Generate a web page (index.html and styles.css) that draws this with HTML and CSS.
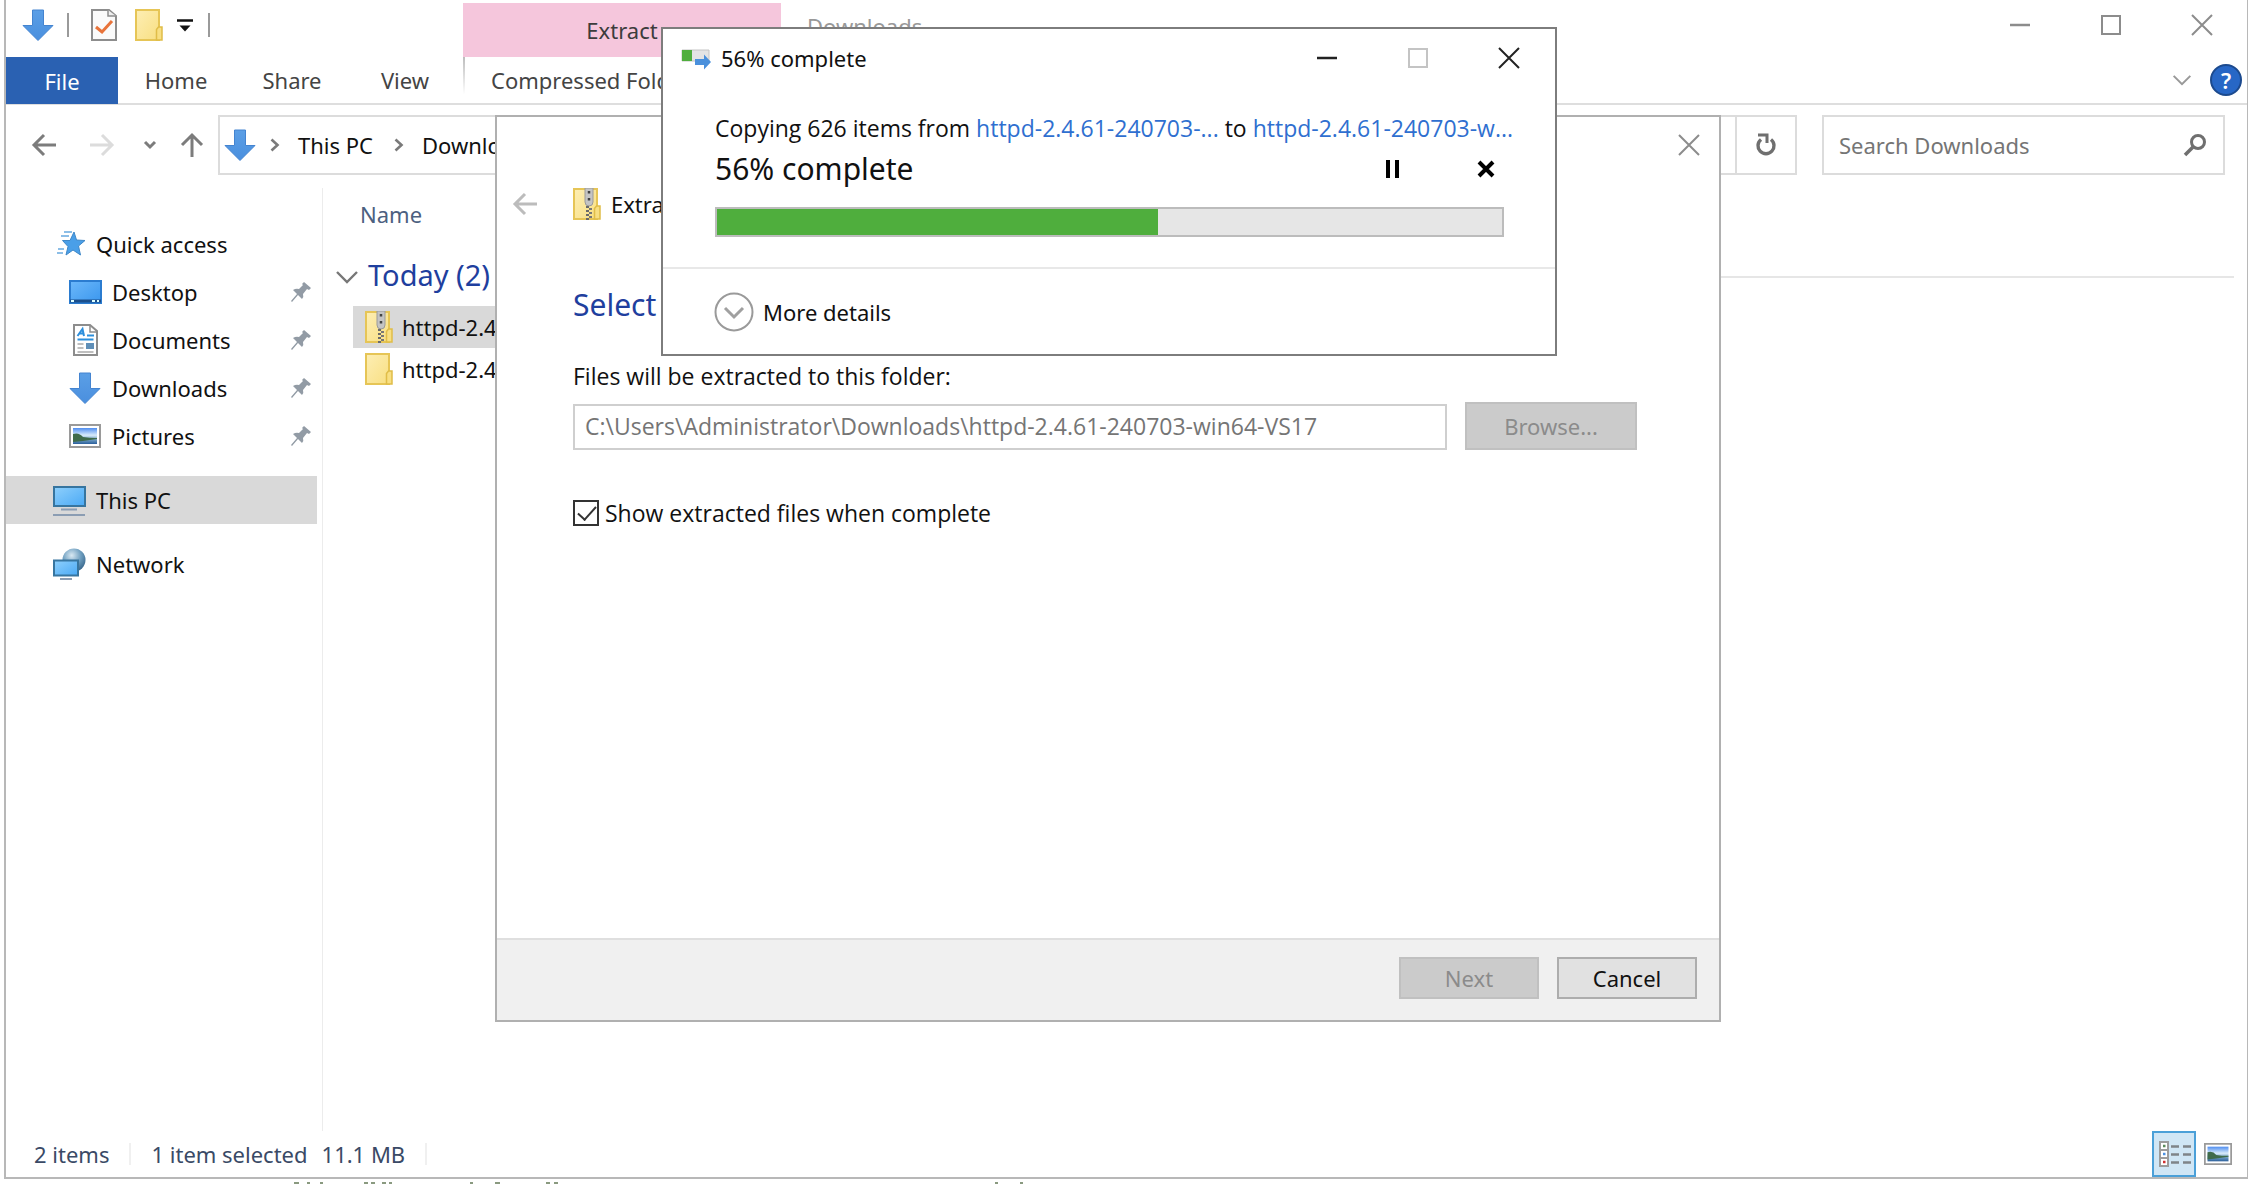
FILE: index.html
```html
<!DOCTYPE html>
<html lang="en">
<head>
<meta charset="utf-8">
<title>Downloads</title>
<link rel="stylesheet" href="styles.css">
</head>
<body>
<svg width="0" height="0" class="defs" aria-hidden="true">
  <defs>
    <linearGradient id="blue" x1="0" y1="0" x2="1" y2="1"><stop offset="0" stop-color="#6cb8fa"/><stop offset="1" stop-color="#3a96ee"/></linearGradient>
    <linearGradient id="screen" x1="0" y1="0" x2="1" y2="1"><stop offset="0" stop-color="#8fd0fc"/><stop offset="1" stop-color="#4aa9f5"/></linearGradient>
    <linearGradient id="arrow" x1="0" y1="0" x2="0" y2="1"><stop offset="0" stop-color="#5b9fe6"/><stop offset="1" stop-color="#4a8fde"/></linearGradient>
    <linearGradient id="yellow" x1="0" y1="0" x2="1" y2="1"><stop offset="0" stop-color="#fdeeb4"/><stop offset="1" stop-color="#f8df82"/></linearGradient>
    <linearGradient id="photo" x1="0" y1="0" x2="0" y2="1"><stop offset="0" stop-color="#4f8df0"/><stop offset=".45" stop-color="#d8ebfa"/><stop offset=".7" stop-color="#7aa6c8"/><stop offset="1" stop-color="#2a5f9c"/></linearGradient>
    <radialGradient id="globe" cx=".4" cy=".3" r=".8"><stop offset="0" stop-color="#d8e8f2"/><stop offset=".5" stop-color="#6f9fc0"/><stop offset="1" stop-color="#2c5a80"/></radialGradient>
    <symbol id="i-down" viewBox="0 0 32 32"><path d="M10.500 1h11v15.500H31L16 31.500 1 16.500h9.500z" fill="url(#arrow)" stroke="#4484d0"/></symbol>
    <symbol id="i-folder" viewBox="0 0 28 32"><path d="M1 1h23v30H1z" fill="url(#yellow)" stroke="#e6c556" stroke-width="2"/><path d="M21.500 31V20.500l2-2.500h3.500v13z" fill="#f8df82" stroke="#e0bd48" stroke-width="1.500"/></symbol>
    <symbol id="i-zip" viewBox="0 0 28 32"><use href="#i-folder"/><path d="M12 0h8v14q0 4-4 4t-4-4z" fill="#c4c4c4" stroke="#9a9a9a"/><path d="M16 3v2.500M16 10v2.500" stroke="#444" stroke-width="2.500"/><path d="M14.500 18v14" stroke="#6a6a6a" stroke-width="3" stroke-dasharray="2 2"/><path d="M17.500 20v12" stroke="#777" stroke-width="3" stroke-dasharray="2 2"/></symbol>
    <symbol id="i-photo" viewBox="0 0 32 24"><path d="M1 1h30v22H1z" fill="#fff" stroke="#9a9a9a" stroke-width="2"/><path d="M4 4h24v16H4z" fill="url(#photo)"/><path d="M4 10q6-2 10 3 6 1 14 1v1l-14 2-10 1z" fill="#3f6b4a"/></symbol>
    <symbol id="i-pin" viewBox="0 0 22 22"><path d="M14 1l7 6-2 2-2-1-4 5q1 3-1 5l-4-4-6 7-1-1 6-7-4-4q3-2 6-1l4-4-1-1z" fill="#929ba5"/></symbol>
    <symbol id="i-close" viewBox="0 0 22 22"><path d="M1 1l20 20M21 1L1 21" fill="none" stroke="currentColor" stroke-width="2"/></symbol>
    <symbol id="i-min" viewBox="0 0 22 22"><path d="M1 11h20" stroke="currentColor" stroke-width="2.500"/></symbol>
    <symbol id="i-max" viewBox="0 0 22 22"><path d="M2 2h18v18H2z" fill="none" stroke="currentColor" stroke-width="2"/></symbol>
    <symbol id="i-back" viewBox="0 0 26 24"><path d="M25 12H2.500M13 2L3 12l10 10" fill="none" stroke="currentColor" stroke-width="3"/></symbol>
    <symbol id="i-crumb" viewBox="0 0 10 14"><path d="M1.500 1.500L7.500 7l-6 5.500" fill="none" stroke="#7a7a7a" stroke-width="2.600"/></symbol>
    <symbol id="i-chev" viewBox="0 0 24 14"><path d="M2 2l10 10L22 2" fill="none" stroke="currentColor" stroke-width="2.400"/></symbol>
  </defs>
</svg>

<main class="explorer">
  <header class="titlebar">
    <div class="quickbar">
      <svg class="ic32 q-app"><use href="#i-down"/></svg>
      <span class="tick"></span>
      <button class="bare q-props" aria-label="Properties"><svg width="26" height="32" viewBox="0 0 26 32"><path d="M1 1h17l7 6v24H1z" fill="#fafafa" stroke="#8d8d8d" stroke-width="2"/><path d="M17 1v6h8" fill="#eee" stroke="#8d8d8d" stroke-width="1.500"/><path d="M5 18l6 5 10-11" fill="none" stroke="#e8733a" stroke-width="3"/></svg></button>
      <button class="bare q-new" aria-label="New folder"><svg class="ic-folder"><use href="#i-folder"/></svg></button>
      <button class="bare q-more" aria-label="Customize"><svg width="16" height="13" viewBox="0 0 16 13"><path d="M0 1.500h16" stroke="#111" stroke-width="2.500"/><path d="M2.500 6.500h11L8 12.500z" fill="#111"/></svg></button>
      <span class="tick"></span>
    </div>
    <div class="context">Extract</div>
    <div class="wintitle">Downloads</div>
    <div class="winbtns gray">
      <button class="bare" aria-label="Minimize"><svg class="ic22"><use href="#i-min"/></svg></button>
      <button class="bare" aria-label="Maximize"><svg class="ic22"><use href="#i-max"/></svg></button>
      <button class="bare" aria-label="Close"><svg class="ic22"><use href="#i-close"/></svg></button>
    </div>
  </header>
  <nav class="ribbon">
    <button class="tab file">File</button>
    <button class="tab">Home</button>
    <button class="tab">Share</button>
    <button class="tab view-tab">View</button>
    <button class="tab tools">Compressed Folder Tools</button>
    <div class="ribbon-end">
      <button class="bare" aria-label="Expand ribbon"><svg class="chev-s"><use href="#i-chev"/></svg></button>
      <button class="help" aria-label="Help">?</button>
    </div>
  </nav>
  <div class="navrow">
    <div class="arrows">
      <button class="bare" aria-label="Back"><svg class="ic-arrow"><use href="#i-back"/></svg></button>
      <button class="bare faint" aria-label="Forward"><svg class="ic-arrow flip"><use href="#i-back"/></svg></button>
      <button class="bare" aria-label="Recent"><svg width="14" height="10" viewBox="0 0 14 10"><path d="M2 2l5 5 5-5" fill="none" stroke="currentColor" stroke-width="3"/></svg></button>
      <button class="bare" aria-label="Up"><svg width="24" height="26" viewBox="0 0 24 26"><path d="M12 25V3M2 13L12 3l10 10" fill="none" stroke="currentColor" stroke-width="3"/></svg></button>
    </div>
    <div class="address">
      <svg class="ic32"><use href="#i-down"/></svg>
      <svg class="crumb"><use href="#i-crumb"/></svg>
      <a href="#pc">This PC</a>
      <svg class="crumb"><use href="#i-crumb"/></svg>
      <a href="#downloads">Downloads</a>
      <button class="bare refresh" aria-label="Refresh"><svg width="22" height="24" viewBox="0 0 22 24"><path d="M16 6.500A8 8 0 1 1 6 6.500" fill="none" stroke="currentColor" stroke-width="3.400"/><path d="M3 2h9v8" fill="none" stroke="currentColor" stroke-width="3"/></svg></button>
    </div>
    <div class="search">
      <input type="search" aria-label="Search Downloads" placeholder="Search Downloads">
      <svg width="24" height="24" viewBox="0 0 24 24"><circle cx="15" cy="9" r="6.500" fill="none" stroke="#6f6f6f" stroke-width="3"/><path d="M10.500 13.500L2 22" stroke="#6f6f6f" stroke-width="3.600"/></svg>
    </div>
  </div>
  <div class="body">
    <aside class="tree">
      <a class="row top" href="#quick"><svg class="ticon" viewBox="0 0 34 32"><path d="M22 4l2.500 8 8.500.5-6.500 5.500 2 9-7.500-5-7 5 2-8.500-5.500-6h7.500z" fill="#4a9fe8" stroke="#3f88c8"/><path d="M12 4h8M9 8h8M6 21h6M5 25h6" stroke="#67a9e0" stroke-width="1.500"/></svg>Quick access</a>
      <a class="row" href="#desktop"><svg class="ticon" viewBox="0 0 34 32"><path d="M2 5h31v22H2z" fill="url(#blue)" stroke="#2b7cd0" stroke-width="2"/><path d="M2 25h31" stroke="#1b4f8c" stroke-width="3"/><path d="M3 25h3M24 25h3M29 25h2" stroke="#dff" stroke-width="2"/></svg>Desktop<svg class="pin"><use href="#i-pin"/></svg></a>
      <a class="row" href="#documents"><svg class="ticon" viewBox="0 0 34 32"><path d="M6 1h16l7 6v24H6z" fill="#fff" stroke="#8d8d8d" stroke-width="2"/><path d="M22 1v7h7" fill="none" stroke="#8d8d8d" stroke-width="1.500"/><path d="M9.500 12l5-7 1.500 7M11 9.500h5M19 11.500h7M9.500 15.500h16" stroke="#2d8fdc" stroke-width="2" fill="none"/><path d="M9.500 20h6M9.500 24h6M9.500 28h16" stroke="#aaa" stroke-width="1.500"/><path d="M18 19h8v6h-8z" fill="#5f8fb8"/></svg>Documents<svg class="pin"><use href="#i-pin"/></svg></a>
      <a class="row" href="#downloads"><svg class="ticon"><use href="#i-down"/></svg>Downloads<svg class="pin"><use href="#i-pin"/></svg></a>
      <a class="row" href="#pictures"><svg class="ticon photo"><use href="#i-photo"/></svg>Pictures<svg class="pin"><use href="#i-pin"/></svg></a>
      <a class="row top selected" href="#pc"><svg class="ticon" viewBox="0 0 34 32"><path d="M2 3h31v19H2z" fill="url(#screen)" stroke="#37759f" stroke-width="2"/><path d="M9 25.500h16M1 31h32" stroke="#8b9db3" stroke-width="2"/></svg>This PC</a>
      <a class="row top" href="#network"><svg class="ticon" viewBox="0 0 34 32"><circle cx="22" cy="12" r="11.500" fill="url(#globe)"/><path d="M2 12.500h24v15H2z" fill="url(#screen)" stroke="#37759f" stroke-width="2"/><path d="M8 31h12" stroke="#8b9db3" stroke-width="2"/></svg>Network</a>
    </aside>
    <section class="list">
      <button class="bare colhead">Name</button>
      <div class="group"><svg class="chev-g"><use href="#i-chev"/></svg><h2>Today (2)</h2><span class="rule"></span></div>
      <a class="item selected" href="#zip"><svg class="ic-folder"><use href="#i-zip"/></svg>httpd-2.4.6</a>
      <a class="item" href="#folder"><svg class="ic-folder"><use href="#i-folder"/></svg>httpd-2.4.6</a>
    </section>
  </div>
  <footer class="status">
    <span class="cell count">2 items</span>
    <span class="cell">1 item selected<span>11.1 MB</span></span>
    <div class="views">
      <button class="view on" aria-label="Details"><svg width="34" height="28" viewBox="0 0 34 28"><path d="M2 2h8v24H2zM2 10h8M2 18h8" fill="#fff" stroke="#9c9c9c" stroke-width="2"/><path d="M13 6.500h8M25 6.500h8M13 14.500h8M25 14.500h8M13 22.500h8M25 22.500h8" stroke="#7f8488" stroke-width="2.500"/><path d="M5 6h2.500" stroke="#5a8a5a" stroke-width="2.500"/><path d="M5 14h2.500" stroke="#4a90e2" stroke-width="2.500"/><path d="M5 22h2.500" stroke="#d03030" stroke-width="2.500"/></svg></button>
      <button class="bare view" aria-label="Large icons"><svg width="28" height="22" viewBox="0 0 32 24" preserveAspectRatio="none"><use href="#i-photo"/></svg></button>
    </div>
  </footer>
</main>
<div class="below"><svg width="760" height="2" viewBox="0 0 760 2"><path d="M6 1h5M19 1h3M32 1h3M76 1h4M83 1h4M94 1h4M101 1h3M182 1h3M207 1h5M258 1h4M266 1h4M707 1h3M732 1h3" stroke="#8a9a80" stroke-width="2"/></svg></div>

<section class="wizard" role="dialog" aria-label="Extract">
  <button class="bare wiz-close" aria-label="Close"><svg class="ic22"><use href="#i-close"/></svg></button>
  <div class="wiz-head">
    <button class="bare" aria-label="Back"><svg class="ic-arrow"><use href="#i-back"/></svg></button>
    <svg class="ic-folder"><use href="#i-zip"/></svg>
    <span>Extract</span>
  </div>
  <div class="wiz-body">
    <h1>Select</h1>
    <label for="dest">Files will be extracted to this folder:</label>
    <div class="field">
      <input id="dest" type="text" value="C:\Users\Administrator\Downloads\httpd-2.4.61-240703-win64-VS17" disabled>
      <button class="btn browse" disabled>Browse...</button>
    </div>
    <label class="check"><input type="checkbox" checked>Show extracted files when complete</label>
  </div>
  <div class="wiz-foot">
    <button class="btn" disabled>Next</button>
    <button class="btn">Cancel</button>
  </div>
</section>

<section class="progress" role="dialog" aria-label="56% complete">
  <header class="p-title">
    <svg width="32" height="24" viewBox="0 0 32 24"><path d="M1 4h27v11H1z" fill="#e4e4e4" stroke="#c4c4c4"/><path d="M1 4h10v11H1z" fill="#4fae3d"/><path d="M14 13h9V8.500l7 7.500-7 7.500V19h-9z" fill="#4a90dc"/></svg>
    <span>56% complete</span>
    <div class="winbtns">
      <button class="bare" aria-label="Minimize"><svg class="ic22"><use href="#i-min"/></svg></button>
      <button class="bare off" aria-label="Maximize" disabled><svg class="ic22"><use href="#i-max"/></svg></button>
      <button class="bare" aria-label="Close"><svg class="ic22"><use href="#i-close"/></svg></button>
    </div>
  </header>
  <div class="p-body">
    <p>Copying 626 items from <a href="#from">httpd-2.4.61-240703-...</a> to <a href="#to">httpd-2.4.61-240703-w...</a></p>
    <div class="p-line">
      <strong>56% complete</strong>
      <button class="bare" aria-label="Pause"><svg width="16" height="18" viewBox="0 0 16 18"><path d="M3 0v18M12 0v18" stroke="#000" stroke-width="4"/></svg></button>
      <button class="bare" aria-label="Cancel"><svg width="18" height="18" viewBox="0 0 18 18"><path d="M2 2l14 14M16 2L2 16" stroke="#000" stroke-width="4"/></svg></button>
    </div>
    <div class="bar" role="progressbar" aria-valuenow="56"><div class="fill" style="width:56.200%"></div></div>
  </div>
  <button class="bare p-more"><svg width="40" height="40" viewBox="0 0 40 40"><circle cx="20" cy="20" r="18.500" fill="none" stroke="#9a9a9a" stroke-width="2"/><path d="M11 16l9 9 9-9" fill="none" stroke="#a0a0a0" stroke-width="3"/></svg>More details</button>
</section>
</body>
</html>
```
FILE: styles.css
```css
* { box-sizing: border-box; }
html, body { height: 100%; }
body {
  margin: 0;
  display: flex;
  flex-direction: column;
  position: relative;
  overflow: hidden;
  background: #fff;
  color: #111;
  font: 22px/30px "Noto Sans", "Open Sans", sans-serif;
}
svg { flex: none; display: block; }
.defs { position: absolute; }
a { color: inherit; text-decoration: none; }
h1, h2, p { margin: 0; font-weight: 400; }
button, input { font: inherit; color: inherit; }
.bare { border: 0; padding: 0; background: none; }
.ic32 { width: 32px; height: 32px; }
.ic22 { width: 22px; height: 22px; }
.ic-folder { width: 28px; height: 32px; }
.ic-arrow { width: 26px; height: 24px; }
.flip { transform: scaleX(-1); }

/* Explorer window */
.explorer {
  flex: 1;
  min-height: 0;
  display: flex;
  flex-direction: column;
  margin-left: 4px;
  border: solid #b8b8b8;
  border-width: 0 1px 2px 2px;
}
.titlebar { display: flex; height: 57px; align-items: flex-start; }
.quickbar { display: flex; align-items: center; width: 457px; padding: 9px 0 0 16px; }
.tick { width: 2px; height: 24px; background: #9a9a9a; }
.q-app { margin-right: 13px; }
.q-props { margin-left: 22px; }
.q-new { margin-left: 18px; }
.q-more { margin: 0 15px 0 14px; }
.context {
  width: 318px;
  height: 54px;
  margin-top: 3px;
  background: #f5c6dc;
  color: #3c3c3c;
  text-align: center;
  line-height: 54px;
}
.wintitle { margin-left: 26px; line-height: 52px; color: #999; }
.winbtns { margin-left: auto; display: flex; gap: 69px; color: #222; }
.gray { padding: 14px 34px 0 0; color: #8c8c8c; }
.off { color: #c4c4c4; }

.ribbon { display: flex; height: 48px; border-bottom: 2px solid #dedede; }
.tab { border: 0; background: none; padding: 0; width: 116px; color: #444; }
.file { width: 112px; height: 47px; background: #2a61b2; color: #fff; }
.view-tab { width: 110px; }
.tools {
  width: 318px;
  margin-left: 3px;
  padding-left: 26px;
  border-left: 2px solid;
  border-image: linear-gradient(#bbb, #fff 80%) 1;
  text-align: left;
}
.ribbon-end { margin-left: auto; display: flex; align-items: center; gap: 18px; padding-right: 5px; color: #999; }
.chev-s { width: 20px; height: 12px; }
.help {
  width: 32px;
  height: 32px;
  padding: 0;
  border: 2px solid #1c4a8e;
  border-radius: 50%;
  background: #2767c6;
  color: #fff;
  font-weight: 600;
  line-height: 28px;
}

.navrow { display: flex; padding: 10px 22px 0 25px; gap: 25px; }
.arrows { display: flex; align-items: center; gap: 32px; width: 162px; color: #7c7c7c; }
.arrows .bare:nth-child(n+3) { margin-left: -4px; }
.arrows .bare:nth-child(4) { margin-left: -9px; }
.faint { color: #dcdcdc; }
.address {
  flex: 1;
  display: flex;
  align-items: center;
  height: 60px;
  border: 2px solid #dcdcdc;
  padding-left: 4px;
}
.address a { margin-right: 7px; }
.crumb { width: 10px; height: 14px; margin: 0 18px 0 14px; }
.refresh {
  margin-left: auto;
  align-self: stretch;
  width: 60px;
  display: grid;
  place-items: center;
  border-left: 2px solid #dcdcdc;
  color: #6f6f6f;
}
.search {
  display: flex;
  align-items: center;
  width: 403px;
  height: 60px;
  border: 2px solid #dcdcdc;
  padding: 0 16px 0 15px;
}
.search input { flex: 1; min-width: 0; border: 0; padding: 0; outline: 0; background: none; }
.search input::placeholder { color: #757575; opacity: 1; }

.body { flex: 1; min-height: 0; display: flex; padding-top: 13px; }
.tree { width: 317px; padding-top: 32px; border-right: 1px solid #ececec; }
.row { display: flex; align-items: center; height: 48px; margin-right: 5px; padding: 0 5px 0 62px; gap: 10px; }
.row.top { padding-left: 46px; }
.row.top + .row.top { margin-top: 16px; }
.row + .selected { margin-top: 16px; }
.ticon { width: 34px; height: 32px; }
.photo { height: 24px; }
.pin { width: 22px; height: 22px; margin-left: auto; }
.selected { background: #d9d9d9; }

.list { flex: 1; padding: 11px 13px 0 12px; }
.colhead { display: block; margin-left: 25px; color: #4c607f; line-height: 30px; }
.group { display: flex; align-items: center; height: 40px; margin-top: 28px; }
.chev-g { width: 24px; height: 14px; margin-right: 9px; color: #777; }
h1, h2 { font-size: 30px; line-height: 36px; color: #1f3f9e; }
h2 { font-size: 29px; padding-bottom: 4px; }
.rule { flex: 1; height: 2px; margin-left: 14px; background: #e6e6e6; }
.item { display: flex; align-items: center; gap: 9px; height: 42px; margin-left: 18px; padding-left: 12px; width: 600px; }
.group + .item { margin-top: 9px; }

.status { display: flex; align-items: center; height: 46px; padding-left: 28px; color: #3a4a66; }
.cell { display: flex; gap: 14px; height: 22px; line-height: 22px; padding-right: 20px; margin-right: 20px; border-right: 2px solid #f0f0f0; }
.views { margin-left: auto; display: flex; align-items: center; gap: 8px; padding-right: 15px; }
.on { width: 44px; height: 46px; padding: 0 0 0 4px; border: 2px solid #4ba0d8; background: #d0e6f5; }
.below { display: flex; align-items: flex-end; height: 5px; padding-left: 288px; background: #fff; }

/* Extraction wizard */
.wizard {
  position: absolute;
  left: 495px;
  top: 115px;
  width: 1226px;
  height: 907px;
  display: flex;
  flex-direction: column;
  border: 2px solid #b0b0b0;
  background: #fff;
}
.wiz-close { align-self: flex-end; margin: 17px 19px 0 0; color: #8c8c8c; }
.wiz-head { display: flex; align-items: center; margin: 32px 0 0 15px; }
.wiz-head .bare { margin-right: 35px; color: #bcbcbc; }
.wiz-head span { margin-left: 10px; }
.wiz-body { flex: 1; padding: 67px 82px 0 76px; }
.wiz-body h1 { margin-bottom: 38px; }
.wiz-body label, .field input, .p-body p { font-family: "Open Sans", "Noto Sans", sans-serif; font-size: 23px; }
.wiz-body label { display: block; }
.field { display: flex; align-items: flex-end; gap: 18px; margin-top: 11px; }
.field input { flex: 1; height: 46px; padding: 0 10px 2px; border: 2px solid #cfcfcf; background: #fff; color: #757575; }
.btn { width: 140px; height: 42px; padding: 0; border: 2px solid #adadad; background: #e1e1e1; color: #111; }
.btn:disabled { border-color: #c0c0c0; background: #cbcbcb; color: #8b8b8b; }
.browse { width: 172px; height: 48px; }
.wiz-body .check { display: flex; align-items: center; gap: 6px; margin-top: 48px; }
.check input {
  appearance: none;
  width: 26px;
  height: 26px;
  margin: 0;
  border: 2px solid #333;
  background: #fff;
  position: relative;
}
.check input::after {
  content: "";
  position: absolute;
  left: 7px;
  top: 0;
  width: 8px;
  height: 16px;
  border: solid #333;
  border-width: 0 2px 2px 0;
  transform: rotate(42deg);
}
.wiz-foot {
  display: flex;
  justify-content: flex-end;
  gap: 18px;
  height: 82px;
  padding: 17px 22px 0;
  border-top: 2px solid #dfdfdf;
  background: #f0f0f0;
}

/* Copy progress */
.progress {
  position: absolute;
  left: 661px;
  top: 27px;
  width: 896px;
  height: 329px;
  border: 2px solid #7d7d7d;
  background: #fff;
}
.p-title { display: flex; align-items: center; gap: 8px; height: 58px; padding: 0 35px 0 18px; }
.p-body { height: 182px; padding: 26px 51px 0 52px; border-bottom: 2px solid #e8e8e8; }
.p-body a { color: #2f6fd0; }
.p-body p { white-space: nowrap; }
.p-line { display: flex; align-items: center; gap: 76px; height: 52px; padding-right: 9px; }
.p-line strong { margin-right: auto; font-size: 30px; font-weight: 400; }
.bar { height: 30px; margin-top: 12px; border: 2px solid #bcbcbc; background: #e6e6e6; }
.fill { height: 100%; background: #4fae3d; }
.p-more { display: flex; align-items: center; gap: 9px; height: 86px; padding-left: 51px; }
```
